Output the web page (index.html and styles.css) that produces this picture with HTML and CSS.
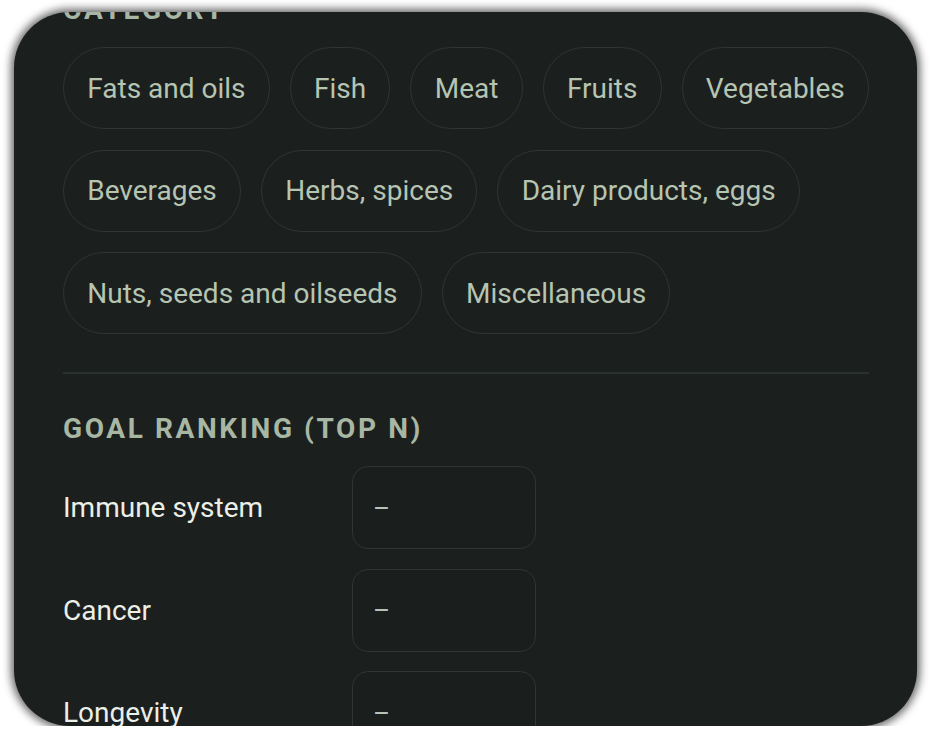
FILE: index.html
```html
<!DOCTYPE html>
<html lang="en">
<head>
<meta charset="utf-8">
<title>Filters</title>
<link rel="stylesheet" href="styles.css">
</head>
<body>
<div class="card">
  <div class="content">
    <h2 class="section-title section-title--top">CATEGORY</h2>
    <div class="chips">
      <button class="chip">Fats and oils</button>
      <button class="chip">Fish</button>
      <button class="chip">Meat</button>
      <button class="chip">Fruits</button>
      <button class="chip">Vegetables</button>
      <button class="chip">Beverages</button>
      <button class="chip">Herbs, spices</button>
      <button class="chip">Dairy products, eggs</button>
      <button class="chip">Nuts, seeds and oilseeds</button>
      <button class="chip">Miscellaneous</button>
    </div>
    <hr class="divider">
    <h2 class="section-title">GOAL RANKING (TOP N)</h2>
    <div class="goals">
      <div class="goal">
        <span class="goal-label">Immune system</span>
        <div class="goal-input">–</div>
      </div>
      <div class="goal">
        <span class="goal-label">Cancer</span>
        <div class="goal-input">–</div>
      </div>
      <div class="goal">
        <span class="goal-label">Longevity</span>
        <div class="goal-input">–</div>
      </div>
    </div>
  </div>
</div>
</body>
</html>
```

FILE: styles.css
```css
html, body {
  margin: 0;
  padding: 0;
  background: #ffffff;
}

body {
  padding: 12px 15px 0 14px;
  font-family: Roboto, "Noto Sans", "Liberation Sans", sans-serif;
}

.card {
  height: 714px;
  background: #1b1f1e;
  border-radius: 56px;
  overflow: hidden;
  box-shadow: 0 0 9px 3px rgba(0, 0, 0, 0.6);
}

.content {
  padding: 0 48px 0 49px;
}

.section-title {
  margin: 0;
  font-size: 28px;
  line-height: 32px;
  font-weight: 700;
  letter-spacing: 2.6px;
  color: #a8b7a4;
  margin-top: 39px;
}

.section-title--top {
  margin-top: -18px;
}

.chips {
  display: flex;
  flex-wrap: wrap;
  gap: 20.5px 20px;
  margin-top: 21px;
  margin-right: -4px;
}

.chip {
  box-sizing: border-box;
  height: 82px;
  padding: 0 23.25px;
  border: 1.5px solid #2f3533;
  border-radius: 41px;
  background: transparent;
  color: #b6c4b2;
  font-family: Roboto, "Noto Sans", "Liberation Sans", sans-serif;
  font-size: 28px;
  font-weight: 400;
  display: inline-flex;
  align-items: center;
}

.divider {
  margin: 37.5px 0 0 0;
  border: 0;
  height: 2px;
  background: #2b3130;
}

.goals {
  display: flex;
  flex-direction: column;
  gap: 19.5px;
  margin-top: 21.5px;
}

.goal {
  display: flex;
  align-items: center;
}

.goal-label {
  width: 289px;
  flex: none;
  color: #eceee8;
  font-size: 28px;
}

.goal-input {
  box-sizing: border-box;
  width: 184px;
  height: 83px;
  border: 1.5px solid #2f3533;
  border-radius: 16px;
  background: #1a1e1d;
  color: #b9c0b8;
  font-size: 26px;
  display: flex;
  align-items: center;
  padding-left: 20px;
}
```
